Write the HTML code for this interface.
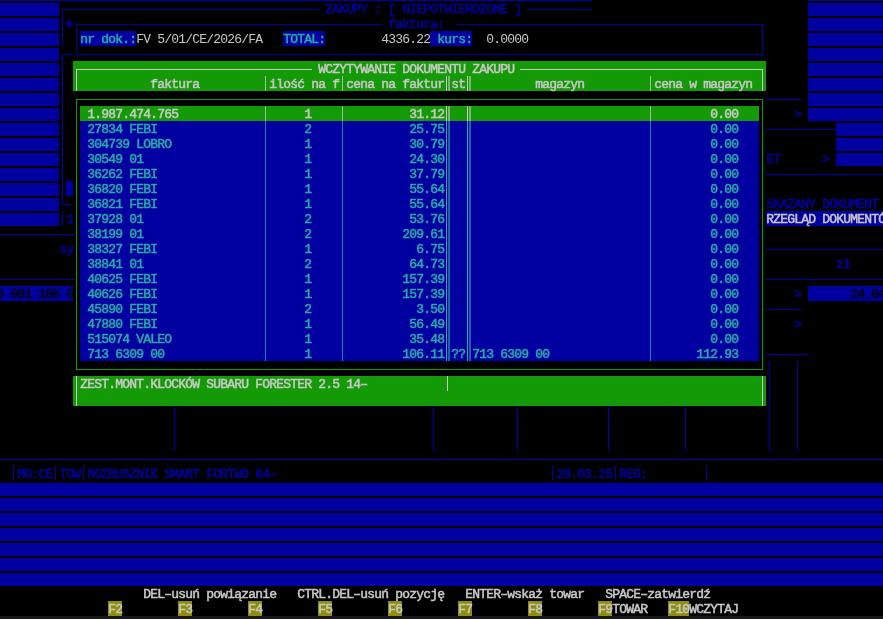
<!DOCTYPE html>
<html><head><meta charset="utf-8"><title>Zakupy</title><style>
html,body{margin:0;padding:0;background:#000;width:883px;height:619px;overflow:hidden;position:relative}
i{position:absolute;display:block}
s{position:absolute;text-decoration:none;white-space:pre;font-family:"Liberation Mono",monospace;font-size:13px;line-height:15px;height:15px;letter-spacing:-0.8013px;margin-left:0.2994px;margin-top:1px}
s.b{-webkit-text-stroke:0.5px currentColor}
#scr{position:absolute;left:0;top:0;width:883px;height:619px;overflow:hidden;will-change:transform}
</style></head>
<body><div id="scr">
<i style="left:0px;top:0px;width:591px;height:1px;background:rgb(0,0,172)"></i>
<i style="left:0px;top:3px;width:59px;height:13px;background:rgb(0,0,160)"></i>
<i style="left:0px;top:18px;width:59px;height:13px;background:rgb(0,0,160)"></i>
<i style="left:0px;top:33px;width:59px;height:13px;background:rgb(0,0,160)"></i>
<i style="left:0px;top:48px;width:59px;height:13px;background:rgb(0,0,160)"></i>
<i style="left:0px;top:63px;width:59px;height:13px;background:rgb(0,0,160)"></i>
<i style="left:0px;top:78px;width:59px;height:13px;background:rgb(0,0,160)"></i>
<i style="left:0px;top:93px;width:59px;height:13px;background:rgb(0,0,160)"></i>
<i style="left:0px;top:108px;width:59px;height:13px;background:rgb(0,0,160)"></i>
<i style="left:0px;top:123px;width:59px;height:13px;background:rgb(0,0,160)"></i>
<i style="left:0px;top:138px;width:59px;height:13px;background:rgb(0,0,160)"></i>
<i style="left:0px;top:153px;width:59px;height:13px;background:rgb(0,0,160)"></i>
<i style="left:0px;top:168px;width:59px;height:13px;background:rgb(0,0,160)"></i>
<i style="left:0px;top:183px;width:59px;height:13px;background:rgb(0,0,160)"></i>
<i style="left:0px;top:198px;width:59px;height:13px;background:rgb(0,0,160)"></i>
<i style="left:0px;top:213px;width:59px;height:13px;background:rgb(0,0,160)"></i>
<i style="left:808px;top:0px;width:75px;height:1px;background:rgb(0,0,160)"></i>
<i style="left:808px;top:3px;width:75px;height:13px;background:rgb(0,0,160)"></i>
<i style="left:808px;top:18px;width:75px;height:13px;background:rgb(0,0,160)"></i>
<i style="left:808px;top:33px;width:75px;height:13px;background:rgb(0,0,160)"></i>
<i style="left:808px;top:48px;width:75px;height:13px;background:rgb(0,0,160)"></i>
<i style="left:808px;top:63px;width:75px;height:13px;background:rgb(0,0,160)"></i>
<i style="left:808px;top:78px;width:75px;height:13px;background:rgb(0,0,160)"></i>
<i style="left:808px;top:93px;width:75px;height:13px;background:rgb(0,0,160)"></i>
<i style="left:808px;top:108px;width:75px;height:13px;background:rgb(0,0,160)"></i>
<i style="left:836px;top:123px;width:47px;height:13px;background:rgb(0,0,160)"></i>
<i style="left:836px;top:138px;width:47px;height:13px;background:rgb(0,0,160)"></i>
<i style="left:836px;top:153px;width:47px;height:13px;background:rgb(0,0,160)"></i>
<i style="left:0px;top:483px;width:883px;height:13px;background:rgb(0,0,160)"></i>
<i style="left:0px;top:498px;width:883px;height:13px;background:rgb(0,0,160)"></i>
<i style="left:0px;top:513px;width:883px;height:13px;background:rgb(0,0,160)"></i>
<i style="left:0px;top:528px;width:883px;height:13px;background:rgb(0,0,160)"></i>
<i style="left:0px;top:543px;width:883px;height:13px;background:rgb(0,0,160)"></i>
<i style="left:0px;top:558px;width:883px;height:13px;background:rgb(0,0,160)"></i>
<i style="left:0px;top:573px;width:883px;height:13px;background:rgb(0,0,160)"></i>
<i style="left:0px;top:616px;width:883px;height:3px;background:rgb(24,24,24)"></i>
<i style="left:62px;top:9px;width:4px;height:1px;background:rgb(0,0,172)"></i>
<i style="left:62px;top:9px;width:1px;height:7px;background:rgb(0,0,172)"></i>
<i style="left:65px;top:9px;width:254px;height:1px;background:rgb(0,0,172)"></i>
<s class="b" style="left:325px;top:1px;color:rgb(0,0,165)">ZAKUPY : [ NIEPOTWIERDZONE ]</s>
<i style="left:527px;top:9px;width:65px;height:1px;background:rgb(0,0,172)"></i>
<i style="left:62px;top:16px;width:1px;height:30px;background:rgb(0,0,172)"></i>
<svg style="position:absolute;left:64px;top:18px" width="12" height="12" viewBox="64 18 12 12"><g stroke="rgb(0,0,178)" stroke-width="1.3" stroke-linecap="round"><line x1="69.6" y1="20.2" x2="69.6" y2="27.4"/><line x1="66.5" y1="22" x2="72.7" y2="25.6"/><line x1="66.5" y1="25.6" x2="72.7" y2="22"/></g></svg>
<i style="left:76px;top:24px;width:4px;height:1px;background:rgb(0,0,172)"></i>
<i style="left:76px;top:24px;width:1px;height:7px;background:rgb(0,0,172)"></i>
<i style="left:79px;top:24px;width:303px;height:1px;background:rgb(0,0,172)"></i>
<s class="b" style="left:388px;top:16px;color:rgb(0,0,165)">faktura:</s>
<i style="left:457px;top:24px;width:303px;height:1px;background:rgb(0,0,172)"></i>
<i style="left:759px;top:24px;width:4px;height:1px;background:rgb(0,0,172)"></i>
<i style="left:762px;top:24px;width:1px;height:7px;background:rgb(0,0,172)"></i>
<i style="left:76px;top:31px;width:1px;height:15px;background:rgb(0,0,172)"></i>
<i style="left:762px;top:31px;width:1px;height:15px;background:rgb(0,0,172)"></i>
<i style="left:80px;top:31px;width:56px;height:15px;background:rgb(0,0,160)"></i>
<s class="b" style="left:80px;top:31px;color:rgb(40,170,170)">nr dok.:</s>
<s class="n" style="left:136px;top:31px;color:rgb(200,200,200)">FV 5/01/CE/2026/FA</s>
<i style="left:283px;top:31px;width:42px;height:15px;background:rgb(0,0,160)"></i>
<s class="b" style="left:283px;top:31px;color:rgb(40,170,170)">TOTAL:</s>
<s class="n" style="left:381px;top:31px;color:rgb(200,200,200)">4336.22</s>
<i style="left:430px;top:31px;width:42px;height:15px;background:rgb(0,0,160)"></i>
<s class="b" style="left:430px;top:31px;color:rgb(40,170,170)"> kurs:</s>
<s class="n" style="left:486px;top:31px;color:rgb(200,200,200)">0.0000</s>
<i style="left:62px;top:54px;width:4px;height:1px;background:rgb(0,0,172)"></i>
<i style="left:62px;top:54px;width:1px;height:7px;background:rgb(0,0,172)"></i>
<i style="left:66px;top:54px;width:7px;height:1px;background:rgb(0,0,172)"></i>
<i style="left:76px;top:54px;width:4px;height:1px;background:rgb(0,0,172)"></i>
<i style="left:76px;top:46px;width:1px;height:9px;background:rgb(0,0,172)"></i>
<i style="left:80px;top:54px;width:679px;height:1px;background:rgb(0,0,172)"></i>
<i style="left:759px;top:54px;width:4px;height:1px;background:rgb(0,0,172)"></i>
<i style="left:762px;top:46px;width:1px;height:9px;background:rgb(0,0,172)"></i>
<i style="left:62px;top:61px;width:1px;height:135px;background:rgb(0,0,172)"></i>
<i style="left:62px;top:204px;width:4px;height:1px;background:rgb(0,0,172)"></i>
<i style="left:62px;top:196px;width:1px;height:9px;background:rgb(0,0,172)"></i>
<i style="left:66px;top:204px;width:7px;height:1px;background:rgb(0,0,172)"></i>
<i style="left:66px;top:181px;width:7px;height:15px;background:rgb(0,0,160)"></i>
<i style="left:62px;top:211px;width:1px;height:15px;background:rgb(0,0,172)"></i>
<s class="b" style="left:66px;top:211px;color:rgb(0,0,165)">1</s>
<i style="left:0px;top:234px;width:75px;height:1px;background:rgb(0,0,172)"></i>
<s class="b" style="left:59px;top:241px;color:rgb(0,0,165)">sy</s>
<i style="left:0px;top:279px;width:75px;height:1px;background:rgb(0,0,172)"></i>
<i style="left:0px;top:286px;width:73px;height:15px;background:rgb(0,0,160)"></i>
<s class="b" style="left:-4px;top:286px;color:#000">0 001 106 0</s>
<i style="left:73px;top:61px;width:693px;height:15px;background:rgb(19,154,6)"></i>
<i style="left:73px;top:76px;width:693px;height:15px;background:rgb(19,154,6)"></i>
<i style="left:76px;top:69px;width:4px;height:1px;background:rgb(200,200,200)"></i>
<i style="left:76px;top:69px;width:1px;height:7px;background:rgb(200,200,200)"></i>
<i style="left:79px;top:69px;width:233px;height:1px;background:rgb(200,200,200)"></i>
<s class="b" style="left:318px;top:61px;color:rgb(200,200,200)">WCZYTYWANIE DOKUMENTU ZAKUPU</s>
<i style="left:520px;top:69px;width:240px;height:1px;background:rgb(200,200,200)"></i>
<i style="left:759px;top:69px;width:4px;height:1px;background:rgb(200,200,200)"></i>
<i style="left:762px;top:69px;width:1px;height:7px;background:rgb(200,200,200)"></i>
<i style="left:76px;top:76px;width:1px;height:15px;background:rgb(200,200,200)"></i>
<i style="left:762px;top:76px;width:1px;height:15px;background:rgb(200,200,200)"></i>
<i style="left:265px;top:76px;width:1px;height:15px;background:rgb(200,200,200);opacity:0.8"></i>
<i style="left:342px;top:76px;width:1px;height:15px;background:rgb(200,200,200);opacity:0.8"></i>
<i style="left:650px;top:76px;width:1px;height:15px;background:rgb(200,200,200);opacity:0.8"></i>
<i style="left:446px;top:76px;width:1px;height:15px;background:rgb(200,200,200)"></i>
<i style="left:448px;top:76px;width:2px;height:15px;background:rgb(200,200,200);opacity:0.6"></i>
<i style="left:467px;top:76px;width:1px;height:15px;background:rgb(200,200,200)"></i>
<i style="left:469px;top:76px;width:2px;height:15px;background:rgb(200,200,200);opacity:0.6"></i>
<s class="b" style="left:150px;top:76px;color:rgb(200,200,200)">faktura</s>
<s class="b" style="left:269px;top:76px;color:rgb(200,200,200)">ilość na f</s>
<s class="b" style="left:346px;top:76px;color:rgb(200,200,200)">cena na faktur</s>
<s class="b" style="left:451px;top:76px;color:rgb(200,200,200)">st</s>
<s class="b" style="left:535px;top:76px;color:rgb(200,200,200)">magazyn</s>
<s class="b" style="left:654px;top:76px;color:rgb(200,200,200)">cena w magazyn</s>
<i style="left:76px;top:99px;width:4px;height:1px;background:rgb(19,154,6)"></i>
<i style="left:76px;top:99px;width:1px;height:7px;background:rgb(19,154,6)"></i>
<i style="left:80px;top:99px;width:679px;height:1px;background:rgb(19,154,6)"></i>
<i style="left:759px;top:99px;width:4px;height:1px;background:rgb(19,154,6)"></i>
<i style="left:762px;top:99px;width:1px;height:7px;background:rgb(19,154,6)"></i>
<i style="left:76px;top:106px;width:1px;height:255px;background:rgb(19,154,6)"></i>
<i style="left:762px;top:106px;width:1px;height:255px;background:rgb(19,154,6)"></i>
<i style="left:76px;top:369px;width:4px;height:1px;background:rgb(19,154,6)"></i>
<i style="left:76px;top:361px;width:1px;height:9px;background:rgb(19,154,6)"></i>
<i style="left:80px;top:369px;width:679px;height:1px;background:rgb(19,154,6)"></i>
<i style="left:759px;top:369px;width:4px;height:1px;background:rgb(19,154,6)"></i>
<i style="left:762px;top:361px;width:1px;height:9px;background:rgb(19,154,6)"></i>
<i style="left:80px;top:106px;width:679px;height:15px;background:rgb(19,154,6)"></i>
<i style="left:265px;top:106px;width:1px;height:15px;background:rgb(200,200,200);opacity:0.75"></i>
<i style="left:342px;top:106px;width:1px;height:15px;background:rgb(200,200,200);opacity:0.75"></i>
<i style="left:650px;top:106px;width:1px;height:15px;background:rgb(200,200,200);opacity:0.75"></i>
<i style="left:446px;top:106px;width:1px;height:15px;background:rgb(200,200,200)"></i>
<i style="left:448px;top:106px;width:2px;height:15px;background:rgb(200,200,200);opacity:0.6"></i>
<i style="left:467px;top:106px;width:1px;height:15px;background:rgb(200,200,200)"></i>
<i style="left:469px;top:106px;width:2px;height:15px;background:rgb(200,200,200);opacity:0.6"></i>
<s class="b" style="left:87px;top:106px;color:rgb(200,200,200)">1.987.474.765</s>
<s class="b" style="left:304px;top:106px;color:rgb(200,200,200)">1</s>
<s class="b" style="left:409px;top:106px;color:rgb(200,200,200)">31.12</s>
<s class="b" style="left:710px;top:106px;color:rgb(200,200,200)">0.00</s>
<i style="left:80px;top:121px;width:679px;height:15px;background:rgb(0,0,160)"></i>
<i style="left:265px;top:121px;width:1px;height:15px;background:rgb(40,170,170);opacity:0.75"></i>
<i style="left:342px;top:121px;width:1px;height:15px;background:rgb(40,170,170);opacity:0.75"></i>
<i style="left:650px;top:121px;width:1px;height:15px;background:rgb(40,170,170);opacity:0.75"></i>
<i style="left:446px;top:121px;width:1px;height:15px;background:rgb(40,170,170)"></i>
<i style="left:448px;top:121px;width:2px;height:15px;background:rgb(40,170,170);opacity:0.6"></i>
<i style="left:467px;top:121px;width:1px;height:15px;background:rgb(40,170,170)"></i>
<i style="left:469px;top:121px;width:2px;height:15px;background:rgb(40,170,170);opacity:0.6"></i>
<s class="b" style="left:87px;top:121px;color:rgb(40,170,170)">27834 FEBI</s>
<s class="b" style="left:304px;top:121px;color:rgb(40,170,170)">2</s>
<s class="b" style="left:409px;top:121px;color:rgb(40,170,170)">25.75</s>
<s class="b" style="left:710px;top:121px;color:rgb(40,170,170)">0.00</s>
<i style="left:80px;top:136px;width:679px;height:15px;background:rgb(0,0,160)"></i>
<i style="left:265px;top:136px;width:1px;height:15px;background:rgb(40,170,170);opacity:0.75"></i>
<i style="left:342px;top:136px;width:1px;height:15px;background:rgb(40,170,170);opacity:0.75"></i>
<i style="left:650px;top:136px;width:1px;height:15px;background:rgb(40,170,170);opacity:0.75"></i>
<i style="left:446px;top:136px;width:1px;height:15px;background:rgb(40,170,170)"></i>
<i style="left:448px;top:136px;width:2px;height:15px;background:rgb(40,170,170);opacity:0.6"></i>
<i style="left:467px;top:136px;width:1px;height:15px;background:rgb(40,170,170)"></i>
<i style="left:469px;top:136px;width:2px;height:15px;background:rgb(40,170,170);opacity:0.6"></i>
<s class="b" style="left:87px;top:136px;color:rgb(40,170,170)">304739 LOBRO</s>
<s class="b" style="left:304px;top:136px;color:rgb(40,170,170)">1</s>
<s class="b" style="left:409px;top:136px;color:rgb(40,170,170)">30.79</s>
<s class="b" style="left:710px;top:136px;color:rgb(40,170,170)">0.00</s>
<i style="left:80px;top:151px;width:679px;height:15px;background:rgb(0,0,160)"></i>
<i style="left:265px;top:151px;width:1px;height:15px;background:rgb(40,170,170);opacity:0.75"></i>
<i style="left:342px;top:151px;width:1px;height:15px;background:rgb(40,170,170);opacity:0.75"></i>
<i style="left:650px;top:151px;width:1px;height:15px;background:rgb(40,170,170);opacity:0.75"></i>
<i style="left:446px;top:151px;width:1px;height:15px;background:rgb(40,170,170)"></i>
<i style="left:448px;top:151px;width:2px;height:15px;background:rgb(40,170,170);opacity:0.6"></i>
<i style="left:467px;top:151px;width:1px;height:15px;background:rgb(40,170,170)"></i>
<i style="left:469px;top:151px;width:2px;height:15px;background:rgb(40,170,170);opacity:0.6"></i>
<s class="b" style="left:87px;top:151px;color:rgb(40,170,170)">30549 01</s>
<s class="b" style="left:304px;top:151px;color:rgb(40,170,170)">1</s>
<s class="b" style="left:409px;top:151px;color:rgb(40,170,170)">24.30</s>
<s class="b" style="left:710px;top:151px;color:rgb(40,170,170)">0.00</s>
<i style="left:80px;top:166px;width:679px;height:15px;background:rgb(0,0,160)"></i>
<i style="left:265px;top:166px;width:1px;height:15px;background:rgb(40,170,170);opacity:0.75"></i>
<i style="left:342px;top:166px;width:1px;height:15px;background:rgb(40,170,170);opacity:0.75"></i>
<i style="left:650px;top:166px;width:1px;height:15px;background:rgb(40,170,170);opacity:0.75"></i>
<i style="left:446px;top:166px;width:1px;height:15px;background:rgb(40,170,170)"></i>
<i style="left:448px;top:166px;width:2px;height:15px;background:rgb(40,170,170);opacity:0.6"></i>
<i style="left:467px;top:166px;width:1px;height:15px;background:rgb(40,170,170)"></i>
<i style="left:469px;top:166px;width:2px;height:15px;background:rgb(40,170,170);opacity:0.6"></i>
<s class="b" style="left:87px;top:166px;color:rgb(40,170,170)">36262 FEBI</s>
<s class="b" style="left:304px;top:166px;color:rgb(40,170,170)">1</s>
<s class="b" style="left:409px;top:166px;color:rgb(40,170,170)">37.79</s>
<s class="b" style="left:710px;top:166px;color:rgb(40,170,170)">0.00</s>
<i style="left:80px;top:181px;width:679px;height:15px;background:rgb(0,0,160)"></i>
<i style="left:265px;top:181px;width:1px;height:15px;background:rgb(40,170,170);opacity:0.75"></i>
<i style="left:342px;top:181px;width:1px;height:15px;background:rgb(40,170,170);opacity:0.75"></i>
<i style="left:650px;top:181px;width:1px;height:15px;background:rgb(40,170,170);opacity:0.75"></i>
<i style="left:446px;top:181px;width:1px;height:15px;background:rgb(40,170,170)"></i>
<i style="left:448px;top:181px;width:2px;height:15px;background:rgb(40,170,170);opacity:0.6"></i>
<i style="left:467px;top:181px;width:1px;height:15px;background:rgb(40,170,170)"></i>
<i style="left:469px;top:181px;width:2px;height:15px;background:rgb(40,170,170);opacity:0.6"></i>
<s class="b" style="left:87px;top:181px;color:rgb(40,170,170)">36820 FEBI</s>
<s class="b" style="left:304px;top:181px;color:rgb(40,170,170)">1</s>
<s class="b" style="left:409px;top:181px;color:rgb(40,170,170)">55.64</s>
<s class="b" style="left:710px;top:181px;color:rgb(40,170,170)">0.00</s>
<i style="left:80px;top:196px;width:679px;height:15px;background:rgb(0,0,160)"></i>
<i style="left:265px;top:196px;width:1px;height:15px;background:rgb(40,170,170);opacity:0.75"></i>
<i style="left:342px;top:196px;width:1px;height:15px;background:rgb(40,170,170);opacity:0.75"></i>
<i style="left:650px;top:196px;width:1px;height:15px;background:rgb(40,170,170);opacity:0.75"></i>
<i style="left:446px;top:196px;width:1px;height:15px;background:rgb(40,170,170)"></i>
<i style="left:448px;top:196px;width:2px;height:15px;background:rgb(40,170,170);opacity:0.6"></i>
<i style="left:467px;top:196px;width:1px;height:15px;background:rgb(40,170,170)"></i>
<i style="left:469px;top:196px;width:2px;height:15px;background:rgb(40,170,170);opacity:0.6"></i>
<s class="b" style="left:87px;top:196px;color:rgb(40,170,170)">36821 FEBI</s>
<s class="b" style="left:304px;top:196px;color:rgb(40,170,170)">1</s>
<s class="b" style="left:409px;top:196px;color:rgb(40,170,170)">55.64</s>
<s class="b" style="left:710px;top:196px;color:rgb(40,170,170)">0.00</s>
<i style="left:80px;top:211px;width:679px;height:15px;background:rgb(0,0,160)"></i>
<i style="left:265px;top:211px;width:1px;height:15px;background:rgb(40,170,170);opacity:0.75"></i>
<i style="left:342px;top:211px;width:1px;height:15px;background:rgb(40,170,170);opacity:0.75"></i>
<i style="left:650px;top:211px;width:1px;height:15px;background:rgb(40,170,170);opacity:0.75"></i>
<i style="left:446px;top:211px;width:1px;height:15px;background:rgb(40,170,170)"></i>
<i style="left:448px;top:211px;width:2px;height:15px;background:rgb(40,170,170);opacity:0.6"></i>
<i style="left:467px;top:211px;width:1px;height:15px;background:rgb(40,170,170)"></i>
<i style="left:469px;top:211px;width:2px;height:15px;background:rgb(40,170,170);opacity:0.6"></i>
<s class="b" style="left:87px;top:211px;color:rgb(40,170,170)">37928 01</s>
<s class="b" style="left:304px;top:211px;color:rgb(40,170,170)">2</s>
<s class="b" style="left:409px;top:211px;color:rgb(40,170,170)">53.76</s>
<s class="b" style="left:710px;top:211px;color:rgb(40,170,170)">0.00</s>
<i style="left:80px;top:226px;width:679px;height:15px;background:rgb(0,0,160)"></i>
<i style="left:265px;top:226px;width:1px;height:15px;background:rgb(40,170,170);opacity:0.75"></i>
<i style="left:342px;top:226px;width:1px;height:15px;background:rgb(40,170,170);opacity:0.75"></i>
<i style="left:650px;top:226px;width:1px;height:15px;background:rgb(40,170,170);opacity:0.75"></i>
<i style="left:446px;top:226px;width:1px;height:15px;background:rgb(40,170,170)"></i>
<i style="left:448px;top:226px;width:2px;height:15px;background:rgb(40,170,170);opacity:0.6"></i>
<i style="left:467px;top:226px;width:1px;height:15px;background:rgb(40,170,170)"></i>
<i style="left:469px;top:226px;width:2px;height:15px;background:rgb(40,170,170);opacity:0.6"></i>
<s class="b" style="left:87px;top:226px;color:rgb(40,170,170)">38199 01</s>
<s class="b" style="left:304px;top:226px;color:rgb(40,170,170)">2</s>
<s class="b" style="left:402px;top:226px;color:rgb(40,170,170)">209.61</s>
<s class="b" style="left:710px;top:226px;color:rgb(40,170,170)">0.00</s>
<i style="left:80px;top:241px;width:679px;height:15px;background:rgb(0,0,160)"></i>
<i style="left:265px;top:241px;width:1px;height:15px;background:rgb(40,170,170);opacity:0.75"></i>
<i style="left:342px;top:241px;width:1px;height:15px;background:rgb(40,170,170);opacity:0.75"></i>
<i style="left:650px;top:241px;width:1px;height:15px;background:rgb(40,170,170);opacity:0.75"></i>
<i style="left:446px;top:241px;width:1px;height:15px;background:rgb(40,170,170)"></i>
<i style="left:448px;top:241px;width:2px;height:15px;background:rgb(40,170,170);opacity:0.6"></i>
<i style="left:467px;top:241px;width:1px;height:15px;background:rgb(40,170,170)"></i>
<i style="left:469px;top:241px;width:2px;height:15px;background:rgb(40,170,170);opacity:0.6"></i>
<s class="b" style="left:87px;top:241px;color:rgb(40,170,170)">38327 FEBI</s>
<s class="b" style="left:304px;top:241px;color:rgb(40,170,170)">1</s>
<s class="b" style="left:416px;top:241px;color:rgb(40,170,170)">6.75</s>
<s class="b" style="left:710px;top:241px;color:rgb(40,170,170)">0.00</s>
<i style="left:80px;top:256px;width:679px;height:15px;background:rgb(0,0,160)"></i>
<i style="left:265px;top:256px;width:1px;height:15px;background:rgb(40,170,170);opacity:0.75"></i>
<i style="left:342px;top:256px;width:1px;height:15px;background:rgb(40,170,170);opacity:0.75"></i>
<i style="left:650px;top:256px;width:1px;height:15px;background:rgb(40,170,170);opacity:0.75"></i>
<i style="left:446px;top:256px;width:1px;height:15px;background:rgb(40,170,170)"></i>
<i style="left:448px;top:256px;width:2px;height:15px;background:rgb(40,170,170);opacity:0.6"></i>
<i style="left:467px;top:256px;width:1px;height:15px;background:rgb(40,170,170)"></i>
<i style="left:469px;top:256px;width:2px;height:15px;background:rgb(40,170,170);opacity:0.6"></i>
<s class="b" style="left:87px;top:256px;color:rgb(40,170,170)">38841 01</s>
<s class="b" style="left:304px;top:256px;color:rgb(40,170,170)">2</s>
<s class="b" style="left:409px;top:256px;color:rgb(40,170,170)">64.73</s>
<s class="b" style="left:710px;top:256px;color:rgb(40,170,170)">0.00</s>
<i style="left:80px;top:271px;width:679px;height:15px;background:rgb(0,0,160)"></i>
<i style="left:265px;top:271px;width:1px;height:15px;background:rgb(40,170,170);opacity:0.75"></i>
<i style="left:342px;top:271px;width:1px;height:15px;background:rgb(40,170,170);opacity:0.75"></i>
<i style="left:650px;top:271px;width:1px;height:15px;background:rgb(40,170,170);opacity:0.75"></i>
<i style="left:446px;top:271px;width:1px;height:15px;background:rgb(40,170,170)"></i>
<i style="left:448px;top:271px;width:2px;height:15px;background:rgb(40,170,170);opacity:0.6"></i>
<i style="left:467px;top:271px;width:1px;height:15px;background:rgb(40,170,170)"></i>
<i style="left:469px;top:271px;width:2px;height:15px;background:rgb(40,170,170);opacity:0.6"></i>
<s class="b" style="left:87px;top:271px;color:rgb(40,170,170)">40625 FEBI</s>
<s class="b" style="left:304px;top:271px;color:rgb(40,170,170)">1</s>
<s class="b" style="left:402px;top:271px;color:rgb(40,170,170)">157.39</s>
<s class="b" style="left:710px;top:271px;color:rgb(40,170,170)">0.00</s>
<i style="left:80px;top:286px;width:679px;height:15px;background:rgb(0,0,160)"></i>
<i style="left:265px;top:286px;width:1px;height:15px;background:rgb(40,170,170);opacity:0.75"></i>
<i style="left:342px;top:286px;width:1px;height:15px;background:rgb(40,170,170);opacity:0.75"></i>
<i style="left:650px;top:286px;width:1px;height:15px;background:rgb(40,170,170);opacity:0.75"></i>
<i style="left:446px;top:286px;width:1px;height:15px;background:rgb(40,170,170)"></i>
<i style="left:448px;top:286px;width:2px;height:15px;background:rgb(40,170,170);opacity:0.6"></i>
<i style="left:467px;top:286px;width:1px;height:15px;background:rgb(40,170,170)"></i>
<i style="left:469px;top:286px;width:2px;height:15px;background:rgb(40,170,170);opacity:0.6"></i>
<s class="b" style="left:87px;top:286px;color:rgb(40,170,170)">40626 FEBI</s>
<s class="b" style="left:304px;top:286px;color:rgb(40,170,170)">1</s>
<s class="b" style="left:402px;top:286px;color:rgb(40,170,170)">157.39</s>
<s class="b" style="left:710px;top:286px;color:rgb(40,170,170)">0.00</s>
<i style="left:80px;top:301px;width:679px;height:15px;background:rgb(0,0,160)"></i>
<i style="left:265px;top:301px;width:1px;height:15px;background:rgb(40,170,170);opacity:0.75"></i>
<i style="left:342px;top:301px;width:1px;height:15px;background:rgb(40,170,170);opacity:0.75"></i>
<i style="left:650px;top:301px;width:1px;height:15px;background:rgb(40,170,170);opacity:0.75"></i>
<i style="left:446px;top:301px;width:1px;height:15px;background:rgb(40,170,170)"></i>
<i style="left:448px;top:301px;width:2px;height:15px;background:rgb(40,170,170);opacity:0.6"></i>
<i style="left:467px;top:301px;width:1px;height:15px;background:rgb(40,170,170)"></i>
<i style="left:469px;top:301px;width:2px;height:15px;background:rgb(40,170,170);opacity:0.6"></i>
<s class="b" style="left:87px;top:301px;color:rgb(40,170,170)">45890 FEBI</s>
<s class="b" style="left:304px;top:301px;color:rgb(40,170,170)">2</s>
<s class="b" style="left:416px;top:301px;color:rgb(40,170,170)">3.50</s>
<s class="b" style="left:710px;top:301px;color:rgb(40,170,170)">0.00</s>
<i style="left:80px;top:316px;width:679px;height:15px;background:rgb(0,0,160)"></i>
<i style="left:265px;top:316px;width:1px;height:15px;background:rgb(40,170,170);opacity:0.75"></i>
<i style="left:342px;top:316px;width:1px;height:15px;background:rgb(40,170,170);opacity:0.75"></i>
<i style="left:650px;top:316px;width:1px;height:15px;background:rgb(40,170,170);opacity:0.75"></i>
<i style="left:446px;top:316px;width:1px;height:15px;background:rgb(40,170,170)"></i>
<i style="left:448px;top:316px;width:2px;height:15px;background:rgb(40,170,170);opacity:0.6"></i>
<i style="left:467px;top:316px;width:1px;height:15px;background:rgb(40,170,170)"></i>
<i style="left:469px;top:316px;width:2px;height:15px;background:rgb(40,170,170);opacity:0.6"></i>
<s class="b" style="left:87px;top:316px;color:rgb(40,170,170)">47880 FEBI</s>
<s class="b" style="left:304px;top:316px;color:rgb(40,170,170)">1</s>
<s class="b" style="left:409px;top:316px;color:rgb(40,170,170)">56.49</s>
<s class="b" style="left:710px;top:316px;color:rgb(40,170,170)">0.00</s>
<i style="left:80px;top:331px;width:679px;height:15px;background:rgb(0,0,160)"></i>
<i style="left:265px;top:331px;width:1px;height:15px;background:rgb(40,170,170);opacity:0.75"></i>
<i style="left:342px;top:331px;width:1px;height:15px;background:rgb(40,170,170);opacity:0.75"></i>
<i style="left:650px;top:331px;width:1px;height:15px;background:rgb(40,170,170);opacity:0.75"></i>
<i style="left:446px;top:331px;width:1px;height:15px;background:rgb(40,170,170)"></i>
<i style="left:448px;top:331px;width:2px;height:15px;background:rgb(40,170,170);opacity:0.6"></i>
<i style="left:467px;top:331px;width:1px;height:15px;background:rgb(40,170,170)"></i>
<i style="left:469px;top:331px;width:2px;height:15px;background:rgb(40,170,170);opacity:0.6"></i>
<s class="b" style="left:87px;top:331px;color:rgb(40,170,170)">515074 VALEO</s>
<s class="b" style="left:304px;top:331px;color:rgb(40,170,170)">1</s>
<s class="b" style="left:409px;top:331px;color:rgb(40,170,170)">35.48</s>
<s class="b" style="left:710px;top:331px;color:rgb(40,170,170)">0.00</s>
<i style="left:80px;top:346px;width:679px;height:15px;background:rgb(0,0,160)"></i>
<i style="left:265px;top:346px;width:1px;height:15px;background:rgb(40,170,170);opacity:0.75"></i>
<i style="left:342px;top:346px;width:1px;height:15px;background:rgb(40,170,170);opacity:0.75"></i>
<i style="left:650px;top:346px;width:1px;height:15px;background:rgb(40,170,170);opacity:0.75"></i>
<i style="left:446px;top:346px;width:1px;height:15px;background:rgb(40,170,170)"></i>
<i style="left:448px;top:346px;width:2px;height:15px;background:rgb(40,170,170);opacity:0.6"></i>
<i style="left:467px;top:346px;width:1px;height:15px;background:rgb(40,170,170)"></i>
<i style="left:469px;top:346px;width:2px;height:15px;background:rgb(40,170,170);opacity:0.6"></i>
<s class="b" style="left:87px;top:346px;color:rgb(40,170,170)">713 6309 00</s>
<s class="b" style="left:304px;top:346px;color:rgb(40,170,170)">1</s>
<s class="b" style="left:402px;top:346px;color:rgb(40,170,170)">106.11</s>
<s class="b" style="left:451px;top:346px;color:rgb(40,170,170)">??</s>
<s class="b" style="left:472px;top:346px;color:rgb(40,170,170)">713 6309 00</s>
<s class="b" style="left:696px;top:346px;color:rgb(40,170,170)">112.93</s>
<i style="left:73px;top:376px;width:693px;height:15px;background:rgb(19,154,6)"></i>
<i style="left:73px;top:391px;width:693px;height:15px;background:rgb(19,154,6)"></i>
<i style="left:76px;top:376px;width:1px;height:30px;background:rgb(200,200,200)"></i>
<i style="left:762px;top:376px;width:1px;height:30px;background:rgb(200,200,200)"></i>
<i style="left:447px;top:376px;width:1px;height:15px;background:rgb(200,200,200)"></i>
<s class="b" style="left:80px;top:376px;color:rgb(200,200,200)">ZEST.MONT.KLOCKÓW SUBARU FORESTER 2.5 14–</s>
<i style="left:765px;top:99px;width:37px;height:1px;background:rgb(0,0,172)"></i>
<s class="b" style="left:794px;top:106px;color:rgb(0,0,165)">&gt;</s>
<i style="left:765px;top:129px;width:72px;height:1px;background:rgb(0,0,172)"></i>
<s class="b" style="left:766px;top:151px;color:rgb(0,0,165)">ET</s>
<s class="b" style="left:822px;top:151px;color:rgb(0,0,165)">&gt;</s>
<i style="left:765px;top:174px;width:118px;height:1px;background:rgb(0,0,172)"></i>
<s class="b" style="left:766px;top:196px;color:rgb(0,0,165)">SKAZANY DOKUMENT </s>
<i style="left:766px;top:211px;width:117px;height:15px;background:rgb(0,0,160)"></i>
<s class="b" style="left:766px;top:211px;color:rgb(200,200,200)">RZEGLĄD DOKUMENTÓ</s>
<i style="left:765px;top:249px;width:118px;height:1px;background:rgb(0,0,172)"></i>
<s class="b" style="left:836px;top:256px;color:rgb(0,0,165)">zł</s>
<i style="left:765px;top:279px;width:118px;height:1px;background:rgb(0,0,172)"></i>
<s class="b" style="left:794px;top:286px;color:rgb(0,0,165)">&gt;</s>
<i style="left:808px;top:286px;width:75px;height:15px;background:rgb(0,0,160)"></i>
<s class="b" style="left:850px;top:286px;color:#000">24.04</s>
<i style="left:765px;top:309px;width:37px;height:1px;background:rgb(0,0,172)"></i>
<s class="b" style="left:794px;top:316px;color:rgb(0,0,165)">&gt;</s>
<i style="left:765px;top:354px;width:44px;height:1px;background:rgb(0,0,172)"></i>
<i style="left:769px;top:361px;width:1px;height:90px;background:rgb(0,0,172)"></i>
<i style="left:797px;top:361px;width:1px;height:90px;background:rgb(0,0,172)"></i>
<i style="left:174px;top:406px;width:1px;height:45px;background:rgb(0,0,172)"></i>
<i style="left:433px;top:406px;width:1px;height:45px;background:rgb(0,0,172)"></i>
<i style="left:517px;top:406px;width:1px;height:45px;background:rgb(0,0,172)"></i>
<i style="left:608px;top:406px;width:1px;height:45px;background:rgb(0,0,172)"></i>
<i style="left:685px;top:406px;width:1px;height:45px;background:rgb(0,0,172)"></i>
<i style="left:0px;top:459px;width:883px;height:1px;background:rgb(0,0,172)"></i>
<i style="left:13px;top:466px;width:1px;height:15px;background:rgb(0,0,172)"></i>
<i style="left:55px;top:466px;width:1px;height:15px;background:rgb(0,0,172)"></i>
<i style="left:83px;top:466px;width:1px;height:15px;background:rgb(0,0,172)"></i>
<i style="left:552px;top:466px;width:1px;height:15px;background:rgb(0,0,172)"></i>
<i style="left:615px;top:466px;width:1px;height:15px;background:rgb(0,0,172)"></i>
<i style="left:706px;top:466px;width:1px;height:15px;background:rgb(0,0,172)"></i>
<s class="b" style="left:17px;top:466px;color:rgb(0,0,165)">MG:CE</s>
<s class="b" style="left:59px;top:466px;color:rgb(0,0,165)">TOW</s>
<s class="b" style="left:87px;top:466px;color:rgb(0,0,165)">ROZRUSZNIK SMART FORTWO 04–</s>
<s class="b" style="left:556px;top:466px;color:rgb(0,0,165)">28.03.25</s>
<s class="b" style="left:619px;top:466px;color:rgb(0,0,165)">REG:</s>
<s class="b" style="left:143px;top:586px;color:rgb(200,200,200)">DEL–usuń powiązanie</s>
<s class="b" style="left:297px;top:586px;color:rgb(200,200,200)">CTRL.DEL–usuń pozycję</s>
<s class="b" style="left:465px;top:586px;color:rgb(200,200,200)">ENTER–wskaż towar</s>
<s class="b" style="left:605px;top:586px;color:rgb(200,200,200)">SPACE–zatwierdź</s>
<i style="left:108px;top:601px;width:14px;height:15px;background:rgb(142,142,12)"></i>
<s class="b" style="left:108px;top:601px;color:rgb(200,200,200)">F2</s>
<i style="left:178px;top:601px;width:14px;height:15px;background:rgb(142,142,12)"></i>
<s class="b" style="left:178px;top:601px;color:rgb(200,200,200)">F3</s>
<i style="left:248px;top:601px;width:14px;height:15px;background:rgb(142,142,12)"></i>
<s class="b" style="left:248px;top:601px;color:rgb(200,200,200)">F4</s>
<i style="left:318px;top:601px;width:14px;height:15px;background:rgb(142,142,12)"></i>
<s class="b" style="left:318px;top:601px;color:rgb(200,200,200)">F5</s>
<i style="left:388px;top:601px;width:14px;height:15px;background:rgb(142,142,12)"></i>
<s class="b" style="left:388px;top:601px;color:rgb(200,200,200)">F6</s>
<i style="left:458px;top:601px;width:14px;height:15px;background:rgb(142,142,12)"></i>
<s class="b" style="left:458px;top:601px;color:rgb(200,200,200)">F7</s>
<i style="left:528px;top:601px;width:14px;height:15px;background:rgb(142,142,12)"></i>
<s class="b" style="left:528px;top:601px;color:rgb(200,200,200)">F8</s>
<i style="left:598px;top:601px;width:14px;height:15px;background:rgb(142,142,12)"></i>
<s class="b" style="left:598px;top:601px;color:rgb(200,200,200)">F9</s>
<i style="left:668px;top:601px;width:21px;height:15px;background:rgb(142,142,12)"></i>
<s class="b" style="left:668px;top:601px;color:rgb(200,200,200)">F10</s>
<s class="b" style="left:612px;top:601px;color:rgb(200,200,200)">TOWAR</s>
<s class="b" style="left:689px;top:601px;color:rgb(200,200,200)">WCZYTAJ</s>
</div></body></html>
